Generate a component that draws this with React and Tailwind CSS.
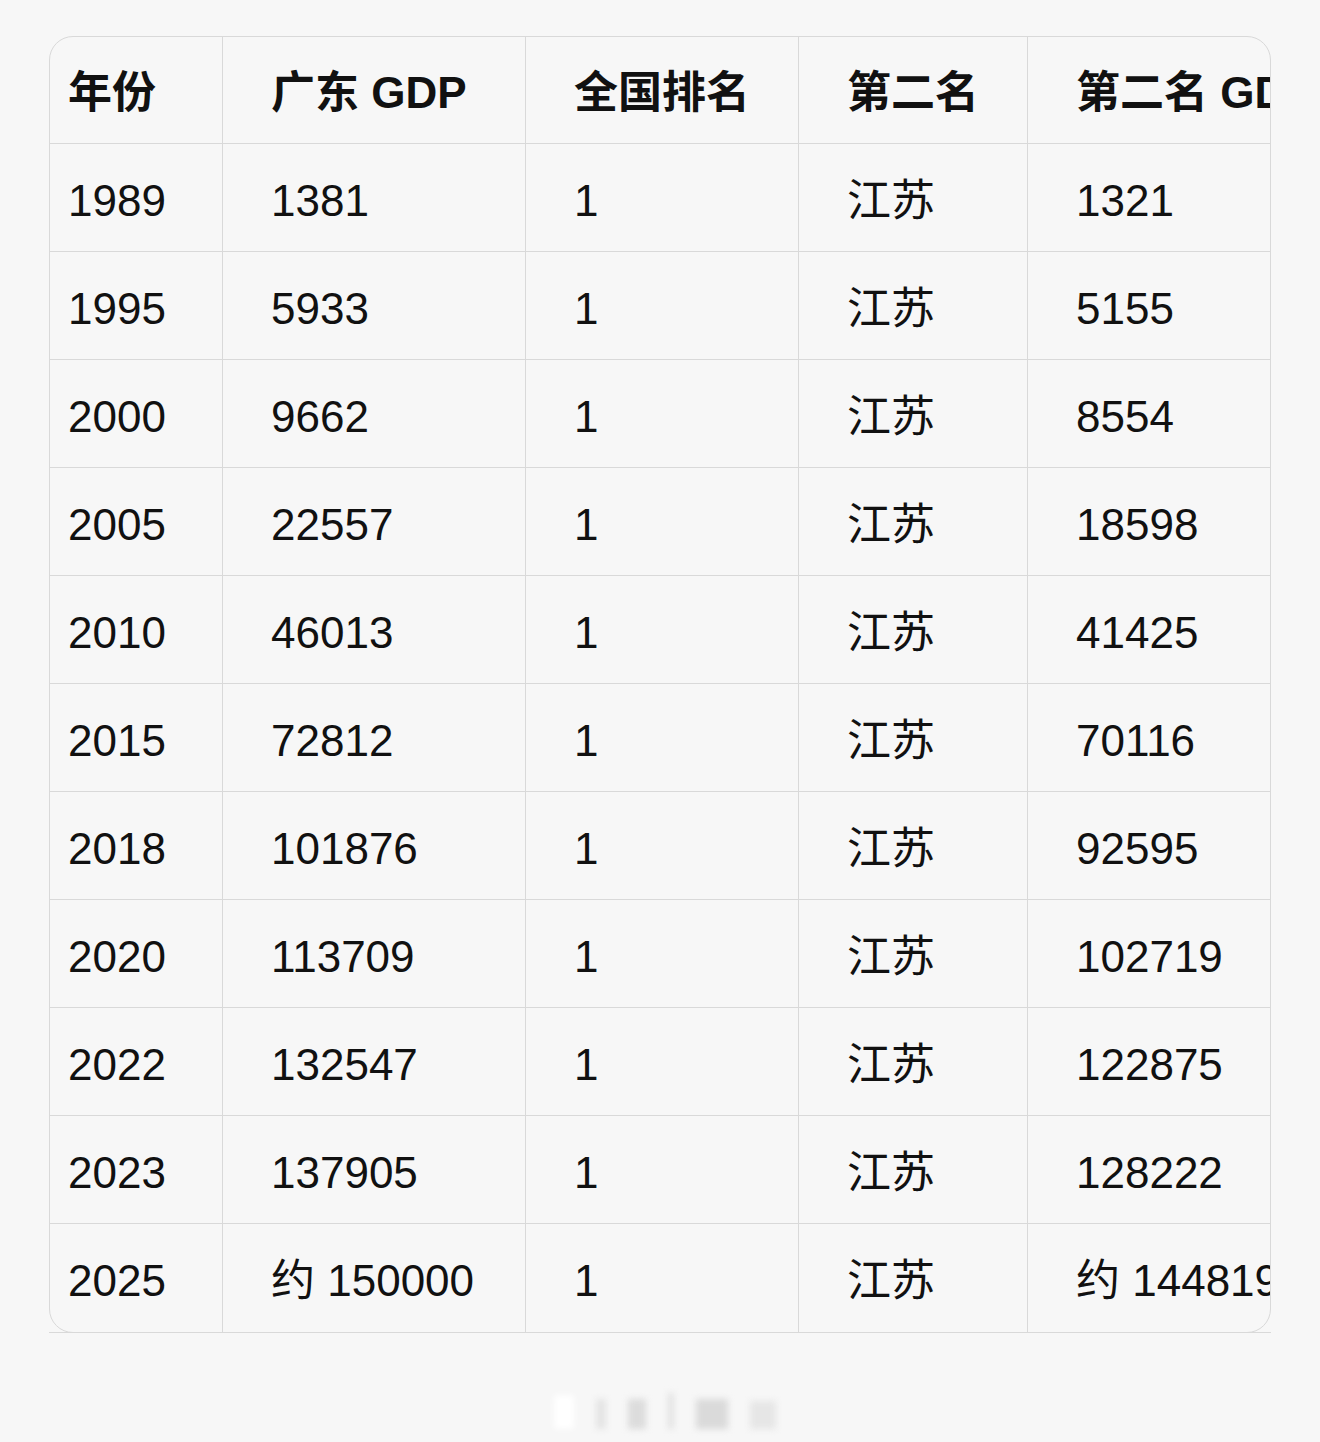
import React from "react";

const HEAD = ["年份", "广东 GDP", "全国排名", "第二名", "第二名 GDP"];

const ROWS = [
  ["1989", "1381", "1", "江苏", "1321"],
  ["1995", "5933", "1", "江苏", "5155"],
  ["2000", "9662", "1", "江苏", "8554"],
  ["2005", "22557", "1", "江苏", "18598"],
  ["2010", "46013", "1", "江苏", "41425"],
  ["2015", "72812", "1", "江苏", "70116"],
  ["2018", "101876", "1", "江苏", "92595"],
  ["2020", "113709", "1", "江苏", "102719"],
  ["2022", "132547", "1", "江苏", "122875"],
  ["2023", "137905", "1", "江苏", "128222"],
  ["2025", "约 150000", "1", "江苏", "约 144819"],
];

const WIDTHS = ["w-[173px]", "w-[303px]", "w-[273px]", "w-[229px]", "w-[300px]"];

function cellPad(i) {
  return i === 0 ? "pl-[18px] pr-4" : "pl-[48px] pr-4";
}

export default function App() {
  return (
    <div className="min-h-[1442px] w-[1320px] bg-[#f7f7f7] pt-[36px] font-['Liberation_Sans','Noto_Sans_CJK_SC',sans-serif] text-[#111]">
      <div className="mx-[49px]">
        <div className="overflow-hidden rounded-[24px] border border-[#d9d9d9] bg-[#f7f7f7]">
          <table className="w-[1278px] table-fixed border-separate border-spacing-0 text-[44px] leading-none">
            <colgroup>
              {WIDTHS.map((w, i) => (
                <col key={i} className={w} />
              ))}
            </colgroup>
            <thead>
              <tr className="h-[107px]">
                {HEAD.map((h, i) => (
                  <th
                    key={h}
                    className={`${cellPad(i)} whitespace-nowrap border-b border-r border-[#d9d9d9] pt-[6px] text-left align-middle font-bold`}
                  >
                    {h}
                  </th>
                ))}
              </tr>
            </thead>
            <tbody>
              {ROWS.map((r, ri) => (
                <tr key={r[0]} className="h-[108px]">
                  {r.map((c, i) => (
                    <td
                      key={i}
                      className={`${cellPad(i)} whitespace-nowrap border-r border-[#d9d9d9] pt-[6px] align-middle ${
                        ri === ROWS.length - 1 ? "" : "border-b"
                      }`}
                    >
                      {c}
                    </td>
                  ))}
                </tr>
              ))}
            </tbody>
          </table>
        </div>
        <div className="-mt-px h-px bg-[#d9d9d9]" />
      </div>

      {/* faded watermark */}
      <div className="mt-[60px] flex items-end justify-center gap-[22px] pl-[10px] blur-[3px]">
        <div className="h-[34px] w-[20px] rounded-sm bg-white" />
        <div className="h-[30px] w-[10px] bg-[#e4e4e4]" />
        <div className="h-[30px] w-[18px] bg-[#dcdcdc]" />
        <div className="h-[36px] w-[6px] bg-[#e2e2e2]" />
        <div className="h-[30px] w-[32px] bg-[#dadada]" />
        <div className="h-[28px] w-[26px] bg-[#e6e6e6]" />
      </div>
    </div>
  );
}
